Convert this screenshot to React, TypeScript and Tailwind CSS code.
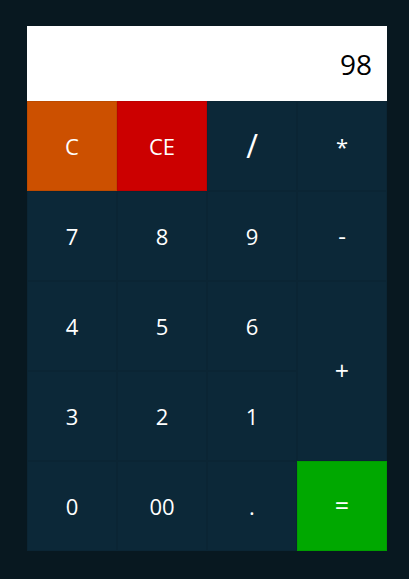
const keys: { label: string; bg?: string; extra?: string }[] = [
  { label: "C", bg: "bg-[#cc5000]" },
  { label: "CE", bg: "bg-[#cc0000]" },
  { label: "/", extra: "text-[32px]" },
  { label: "*", extra: "text-[20px]" },
  { label: "7" },
  { label: "8" },
  { label: "9" },
  { label: "-", extra: "text-[24px]" },
  { label: "4" },
  { label: "5" },
  { label: "6" },
  { label: "+", extra: "row-span-2 text-[25px]" },
  { label: "3" },
  { label: "2" },
  { label: "1" },
  { label: "0" },
  { label: "00" },
  { label: "." },
  { label: "=", bg: "bg-[#00a800]", extra: "text-[25px]" },
];

const App = () => {
  return (
    <div className="min-h-screen bg-[#081820] pt-[26px] pl-[27px]" style={{ fontFamily: "'Open Sans', Lato, sans-serif" }}>
      <div className="w-[360px]">
        <div className="h-[75px] bg-white flex items-center justify-end pr-[15px] text-[28px] text-black">98</div>
        <div className="grid grid-cols-4 auto-rows-[90px]">
          {keys.map((k) => (
            <button
              key={k.label}
              className={`flex items-center justify-center text-white text-[22px] border border-black/[0.07] ${k.bg ?? "bg-[#0c2838]"} ${k.extra ?? ""}`}
            >
              {k.label}
            </button>
          ))}
        </div>
      </div>
    </div>
  );
};

export default App;
